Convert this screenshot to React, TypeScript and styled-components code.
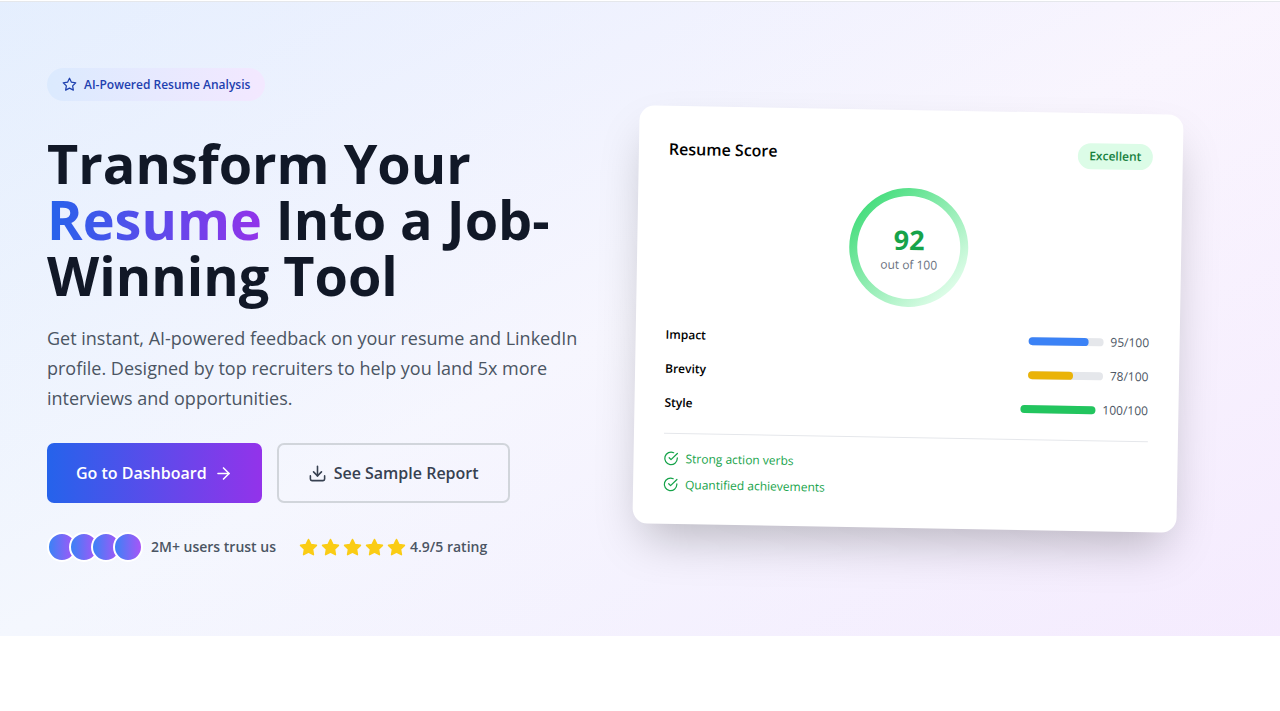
import React from "react";
import styled, { createGlobalStyle } from "styled-components";
import { FiArrowRight, FiCheckCircle, FiDownload, FiStar } from "react-icons/fi";

const GlobalStyle = createGlobalStyle`
  *, *::before, *::after { box-sizing: border-box; }
  body {
    margin: 0;
    background: #ffffff;
    color: #000000;
    font-family: "Segoe UI", "Open Sans", "Noto Sans", sans-serif;
    font-size: 14px;
    line-height: 20px;
  }
  h1, h2, p, ul, dl, dd { margin: 0; padding: 0; }
  button { font-family: inherit; cursor: pointer; }
`;

const Hero = styled.section`
  padding: 66px 101px 74px 47px;
  border-top: 1px solid #e5e7eb;
  margin-top: 1px;
  background:
    linear-gradient(to right, rgba(37, 99, 235, 0.05), rgba(147, 51, 234, 0.05)),
    linear-gradient(to bottom right, #eff6ff, #ffffff, #faf5ff);
  @media (max-width: 900px) {
    padding-right: 47px;
  }
`;

const HeroGrid = styled.div`
  display: grid;
  grid-template-columns: 1fr 1fr;
  column-gap: 45px;
  align-items: center;
  @media (max-width: 900px) {
    grid-template-columns: 1fr;
  }
`;

const Intro = styled.div`
  display: flex;
  flex-direction: column;
  align-items: flex-start;
`;

const Badge = styled.span`
  display: inline-flex;
  align-items: center;
  gap: 7px;
  padding: 7px 15px;
  border-radius: 999px;
  background: linear-gradient(to right, #dbeafe, #f3e8ff);
  color: #1e40af;
  font-size: 12px;
  font-weight: 600;
  line-height: 19px;
`;

const Title = styled.h1`
  margin-top: 34px;
  color: #111827;
  font-size: 54px;
  font-weight: 700;
  line-height: 56px;
`;

const Accent = styled.span`
  background: linear-gradient(to right, #2563eb, #9333ea);
  -webkit-background-clip: text;
  background-clip: text;
  color: transparent;
`;

const Lead = styled.p`
  margin-top: 20px;
  color: #4b5563;
  font-size: 18px;
  line-height: 30px;
`;

const Actions = styled.div`
  display: flex;
  flex-wrap: wrap;
  gap: 15px;
  margin-top: 30px;
`;

const Button = styled.button<{ $primary?: boolean }>`
  display: inline-flex;
  align-items: center;
  gap: 7px;
  padding: 0 29px;
  height: 60px;
  border: ${(p) => (p.$primary ? "0" : "2px solid #d1d5db")};
  border-radius: 7px;
  background: ${(p) => (p.$primary ? "linear-gradient(to right, #2563eb, #9333ea)" : "transparent")};
  color: ${(p) => (p.$primary ? "#ffffff" : "#374151")};
  font-size: 16px;
  font-weight: 600;
  line-height: 26px;
`;

const Proof = styled.div`
  display: flex;
  flex-wrap: wrap;
  align-items: center;
  gap: 23px;
  margin-top: 29px;
  color: #4b5563;
  font-weight: 600;
`;

const ProofItem = styled.div<{ $gap: number }>`
  display: flex;
  align-items: center;
  gap: ${(p) => p.$gap}px;
`;

const Avatars = styled.div`
  display: flex;
`;

const Avatar = styled.span`
  width: 30px;
  height: 30px;
  border: 2px solid #ffffff;
  border-radius: 50%;
  background: linear-gradient(to right, #3b82f6, #a855f7);
  & + & { margin-left: -8px; }
`;

const Stars = styled.div`
  display: flex;
  gap: 3px;
  color: #facc15;
  svg { fill: currentColor; }
`;

const Preview = styled.div`
  padding-top: 8px;
`;

const Card = styled.article`
  padding: 30px;
  border-radius: 15px;
  background: #ffffff;
  box-shadow: 0 23px 47px -11px rgba(0, 0, 0, 0.25);
  transform: rotate(1deg);
`;

const CardHeader = styled.header`
  display: flex;
  align-items: center;
  justify-content: space-between;
`;

const CardTitle = styled.h2`
  font-size: 16px;
  font-weight: 600;
  line-height: 26px;
`;

const Grade = styled.span`
  padding: 4px 11px;
  border-radius: 999px;
  background: #dcfce7;
  color: #15803d;
  font-size: 12px;
  font-weight: 600;
  line-height: 18px;
`;

const Ring = styled.div`
  display: grid;
  width: 119px;
  height: 119px;
  margin: 22px auto;
  padding: 8px;
  border-radius: 50%;
  background: linear-gradient(to bottom right, #4ade80 15%, #dcfce7 85%);
`;

const RingCenter = styled.div`
  display: flex;
  flex-direction: column;
  align-items: center;
  justify-content: center;
  padding-top: 4px;
  border-radius: 50%;
  background: #ffffff;
`;

const Score = styled.strong`
  color: #16a34a;
  font-size: 27px;
  font-weight: 700;
  line-height: 30px;
`;

const ScoreNote = styled.span`
  color: #6b7280;
  font-size: 12px;
  line-height: 19px;
`;

const Metrics = styled.dl`
  display: flex;
  flex-direction: column;
  gap: 15px;
`;

const Metric = styled.div`
  display: flex;
  align-items: center;
  justify-content: space-between;
  font-size: 12px;
  line-height: 19px;
`;

const MetricName = styled.dt`
  font-weight: 600;
`;

const MetricValue = styled.dd`
  display: flex;
  align-items: center;
  gap: 7px;
  color: #4b5563;
`;

const Track = styled.span`
  width: 75px;
  height: 8px;
  border-radius: 4px;
  background: #e5e7eb;
`;

const Fill = styled.span<{ $color: string }>`
  display: block;
  height: 8px;
  border-radius: 4px;
  background: ${(p) => p.$color};
`;

const Strengths = styled.ul`
  display: flex;
  flex-direction: column;
  gap: 7px;
  margin-top: 21px;
  padding-top: 15px;
  border-top: 1px solid #e5e7eb;
  color: #16a34a;
  font-size: 12px;
  line-height: 19px;
  list-style: none;
`;

const Strength = styled.li`
  display: flex;
  align-items: center;
  gap: 7px;
`;

const metrics = [
  { name: "Impact", score: 95, fill: 80, color: "#3b82f6" },
  { name: "Brevity", score: 78, fill: 60, color: "#eab308" },
  { name: "Style", score: 100, fill: 100, color: "#22c55e" },
];

const strengths = ["Strong action verbs", "Quantified achievements"];

export default function App() {
  return (
    <>
      <GlobalStyle />
      <main>
        <Hero>
          <HeroGrid>
            <Intro>
              <Badge>
                <FiStar size={15} />
                AI-Powered Resume Analysis
              </Badge>
              <Title>
                Transform Your <Accent>Resume</Accent> Into a Job-Winning Tool
              </Title>
              <Lead>
                Get instant, AI-powered feedback on your resume and LinkedIn profile. Designed by top
                recruiters to help you land 5x more interviews and opportunities.
              </Lead>
              <Actions>
                <Button type="button" $primary>
                  Go to Dashboard
                  <FiArrowRight size={19} />
                </Button>
                <Button type="button">
                  <FiDownload size={19} />
                  See Sample Report
                </Button>
              </Actions>
              <Proof>
                <ProofItem $gap={8}>
                  <Avatars>
                    {[0, 1, 2, 3].map((i) => (
                      <Avatar key={i} />
                    ))}
                  </Avatars>
                  <span>2M+ users trust us</span>
                </ProofItem>
                <ProofItem $gap={4}>
                  <Stars>
                    {[0, 1, 2, 3, 4].map((i) => (
                      <FiStar key={i} size={19} />
                    ))}
                  </Stars>
                  <span>4.9/5 rating</span>
                </ProofItem>
              </Proof>
            </Intro>
            <Preview>
              <Card>
                <CardHeader>
                  <CardTitle>Resume Score</CardTitle>
                  <Grade>Excellent</Grade>
                </CardHeader>
                <Ring>
                  <RingCenter>
                    <Score>92</Score>
                    <ScoreNote>out of 100</ScoreNote>
                  </RingCenter>
                </Ring>
                <Metrics>
                  {metrics.map((m) => (
                    <Metric key={m.name}>
                      <MetricName>{m.name}</MetricName>
                      <MetricValue>
                        <Track>
                          <Fill $color={m.color} style={{ width: `${m.fill}%` }} />
                        </Track>
                        {m.score}/100
                      </MetricValue>
                    </Metric>
                  ))}
                </Metrics>
                <Strengths>
                  {strengths.map((s) => (
                    <Strength key={s}>
                      <FiCheckCircle size={15} />
                      {s}
                    </Strength>
                  ))}
                </Strengths>
              </Card>
            </Preview>
          </HeroGrid>
        </Hero>
      </main>
    </>
  );
}
